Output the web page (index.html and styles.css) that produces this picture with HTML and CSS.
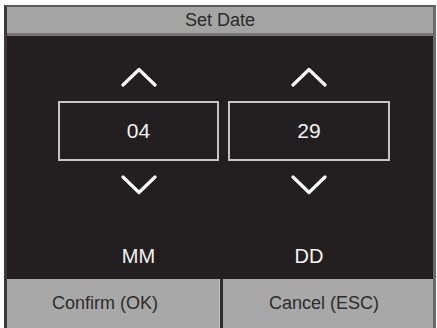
FILE: index.html
```html
<!DOCTYPE html>
<html>
<head>
<meta charset="utf-8">
<link rel="stylesheet" href="styles.css">
</head>
<body>
<div class="frame">
  <div class="title">Set Date</div>
  <div class="main">
    <div class="col">
      <svg class="chev" width="36" height="20" viewBox="0 0 36 20"><polyline points="2,18 18,2.5 34,18" fill="none" stroke="#fff" stroke-width="3.2" stroke-linecap="round" stroke-linejoin="round"/></svg>
      <div class="box">04</div>
      <svg class="chev down" width="36" height="20" viewBox="0 0 36 20"><polyline points="2,2 18,17.5 34,2" fill="none" stroke="#fff" stroke-width="3.2" stroke-linecap="round" stroke-linejoin="round"/></svg>
      <div class="label">MM</div>
    </div>
    <div class="col">
      <svg class="chev" width="36" height="20" viewBox="0 0 36 20"><polyline points="2,18 18,2.5 34,18" fill="none" stroke="#fff" stroke-width="3.2" stroke-linecap="round" stroke-linejoin="round"/></svg>
      <div class="box">29</div>
      <svg class="chev down" width="36" height="20" viewBox="0 0 36 20"><polyline points="2,2 18,17.5 34,2" fill="none" stroke="#fff" stroke-width="3.2" stroke-linecap="round" stroke-linejoin="round"/></svg>
      <div class="label">DD</div>
    </div>
  </div>
  <div class="buttons">
    <div class="btn btn-ok">Confirm (OK)</div>
    <div class="divider"></div>
    <div class="btn btn-esc">Cancel (ESC)</div>
  </div>
</div>
</body>
</html>
```

FILE: styles.css
```css
html, body {
  margin: 0;
  padding: 0;
  background: #ffffff;
  overflow: hidden;
}
body {
  font-family: "Liberation Sans", Arial, sans-serif;
}
.frame {
  margin: 5px 1px 0 4px;
  height: 323px;
  border-left: 3px solid #3a3a3a;
  border-right: 3px solid #6a6a6a;
  border-top: 2px solid #5a5a5a;
  display: flex;
  flex-direction: column;
  box-sizing: border-box;
  background: #231f20;
}
.title {
  height: 26px;
  background: #a4a4a4;
  border-bottom: 3px solid #747474;
  color: #2a2a2a;
  font-size: 18px;
  line-height: 26px;
  text-align: center;
}
.main {
  height: 243px;
  display: grid;
  grid-template-columns: 161px 162px;
  column-gap: 9px;
  padding-left: 51px;
  box-sizing: border-box;
}
.col {
  display: flex;
  flex-direction: column;
  align-items: center;
  padding-top: 31px;
}
.chev {
  display: block;
}
.box {
  margin-top: 14px;
  width: 100%;
  height: 60px;
  box-sizing: border-box;
  border: 2px solid #c4c4c4;
  color: #f2f2f2;
  font-size: 21px;
  line-height: 56px;
  text-align: center;
}
.chev.down {
  margin-top: 14px;
}
.label {
  margin-top: 49px;
  color: #f4f4f4;
  font-size: 20px;
  line-height: 24px;
}
.buttons {
  flex: 1;
  display: flex;
  background: #a8a8a8;
}
.btn {
  flex: 1;
  color: #2c2c2c;
  font-size: 18px;
  line-height: 49px;
  text-align: center;
  box-sizing: border-box;
}
.btn-ok {
  flex: 0 0 212px;
  padding-right: 16px;
}
.btn-esc {
  padding-right: 8px;
}
.divider {
  width: 3px;
  background: #2e2e2e;
  border-left: 1px solid #c0c0c0;
}
```
